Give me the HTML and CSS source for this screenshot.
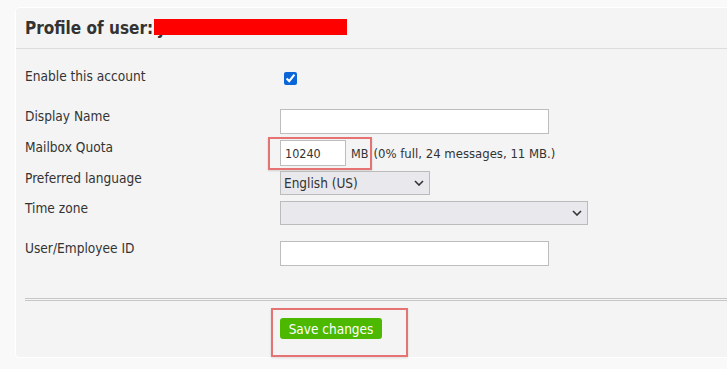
FILE: index.html
```html
<!DOCTYPE html>
<html>
<head>
<meta charset="utf-8">
<link rel="stylesheet" href="styles.css">
</head>
<body>
<div class="panel">
  <div class="header">
    <h1 class="title">Profile of user: <span class="user">j<span class="redact"></span></span></h1>
  </div>
  <div class="form">
    <div class="row row-enable">
      <label class="label">Enable this account</label>
      <div class="field"><input type="checkbox" class="check" checked></div>
    </div>
    <div class="row row-31">
      <label class="label">Display Name</label>
      <div class="field"><input type="text" class="input wide"></div>
    </div>
    <div class="row row-31">
      <label class="label">Mailbox Quota</label>
      <div class="field quota">
        <input type="text" class="input small" value="10240">
        <span class="unit">MB</span>
        <span class="info">(0% full, 24 messages, 11 MB.)</span>
        <span class="mark mark-quota"></span>
      </div>
    </div>
    <div class="row row-30">
      <label class="label">Preferred language</label>
      <div class="field">
        <div class="select-wrap lang">
          <select class="select"><option>English (US)</option></select>
          <svg class="chev" width="10" height="6" viewBox="0 0 10 6"><path d="M1 1 L5 5 L9 1" fill="none" stroke="#333" stroke-width="1.6"/></svg>
        </div>
      </div>
    </div>
    <div class="row row-40">
      <label class="label">Time zone</label>
      <div class="field">
        <div class="select-wrap tz">
          <select class="select"><option></option></select>
          <svg class="chev" width="10" height="6" viewBox="0 0 10 6"><path d="M1 1 L5 5 L9 1" fill="none" stroke="#333" stroke-width="1.6"/></svg>
        </div>
      </div>
    </div>
    <div class="row row-last">
      <label class="label">User/Employee ID</label>
      <div class="field"><input type="text" class="input wide"></div>
    </div>
  </div>
  <div class="sep"></div>
  <div class="actions">
    <button class="save">Save changes</button>
    <span class="mark mark-save"></span>
  </div>
</div>
</body>
</html>
```
FILE: styles.css
```css
html, body {
  margin: 0;
  padding: 0;
  background: #f9f9f9;
  overflow: hidden;
  width: 727px;
  height: 369px;
  font-family: "DejaVu Sans Condensed", "DejaVu Sans", sans-serif;
  color: #333;
}
.panel {
  margin: 7px 0 0 15px;
  width: 740px;
  height: 351px;
  background: #f4f4f4;
  border: 1px solid #fff;
  border-radius: 4px;
  box-sizing: border-box;
}
.header {
  height: 40px;
  border-bottom: 1px solid #dcdcdc;
  padding-left: 9px;
  display: flex;
  align-items: center;
}
.title {
  margin: 0;
  font-size: 17px;
  font-weight: bold;
  color: #333;
}
.user {
  position: relative;
  display: inline-block;
}
.redact {
  position: absolute;
  left: -4px;
  top: 1px;
  width: 193px;
  height: 16px;
  background: #ff0000;
}
.form {
  padding: 19px 0 0 9px;
}
.row {
  display: flex;
  align-items: flex-start;
}
.label {
  width: 255px;
  flex: none;
  font-size: 13.6px;
  line-height: 16px;
  margin-top: -1px;
}
.row-enable { height: 41px; }
.row-31 { height: 31px; }
.row-30 { height: 30px; }
.row-40 { height: 40px; }
.row-last { height: 26px; }
.row-enable .label { margin-top: 0; }
.field {
  display: flex;
  align-items: center;
  position: relative;
}
.check {
  margin: 4px 0 0 4px;
  width: 13px;
  height: 13px;
  accent-color: #0b65d8;
}
.input {
  box-sizing: border-box;
  height: 25px;
  border: 1px solid #bdbdbd;
  background: #fff;
  margin: 0;
  padding: 0 4px;
  font-family: inherit;
  font-size: 12.5px;
  color: #333;
  outline: none;
}
.wide { width: 269px; }
.small { width: 66px; height: 26px; }
.unit {
  margin-left: 5px;
  font-size: 12.5px;
}
.info {
  margin-left: 5px;
  font-size: 13px;
}
.mark {
  position: absolute;
  border: 2px solid #e57373;
  box-shadow: 0 1px 2px rgba(0,0,0,0.15);
  pointer-events: none;
}
.mark-quota {
  left: -12px;
  top: -3px;
  width: 100px;
  height: 29px;
}
.select-wrap {
  position: relative;
  height: 24px;
}
.select {
  appearance: none;
  -webkit-appearance: none;
  width: 100%;
  height: 24px;
  box-sizing: border-box;
  border: 1px solid #bbb;
  background: #e9e9ed;
  margin: 0;
  padding: 0 3px;
  font-family: inherit;
  font-size: 13.5px;
  color: #333;
  border-radius: 0;
  outline: none;
}
.lang { width: 150px; }
.tz { width: 308px; }
.chev {
  position: absolute;
  right: 6px;
  top: 9px;
}
.sep {
  margin: 31px 0 0 9px;
  height: 1px;
  border-top: 1px solid #c6c6c6;
  border-bottom: 1px solid #c6c6c6;
}
.actions {
  position: relative;
  padding: 17px 0 0 264px;
}
.save {
  height: 21px;
  width: 102px;
  background: #4cb800;
  color: #fff;
  border: none;
  border-radius: 3px;
  font-family: inherit;
  font-size: 13.5px;
  padding: 0;
  margin: 0;
}
.mark-save {
  left: 255px;
  top: 7px;
  width: 133px;
  height: 45px;
}
```
